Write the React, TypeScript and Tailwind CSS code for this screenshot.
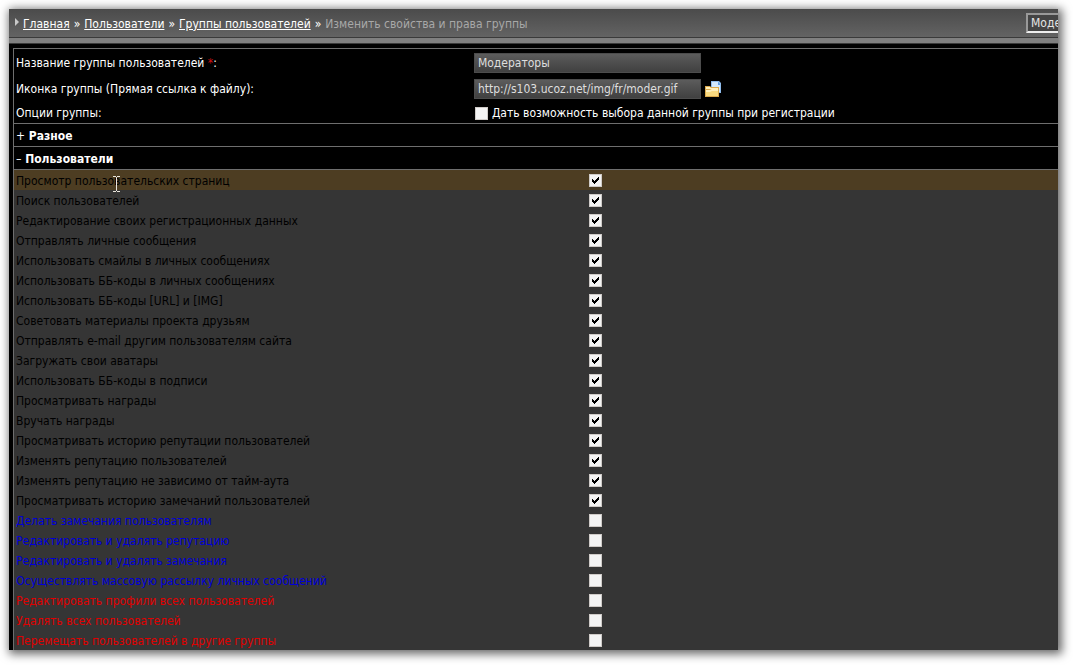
import { useState } from "react";

const permissions = [
  { label: "Просмотр пользовательских страниц", on: true },
  { label: "Поиск пользователей", on: true },
  { label: "Редактирование своих регистрационных данных", on: true },
  { label: "Отправлять личные сообщения", on: true },
  { label: "Использовать смайлы в личных сообщениях", on: true },
  { label: "Использовать ББ-коды в личных сообщениях", on: true },
  { label: "Использовать ББ-коды [URL] и [IMG]", on: true },
  { label: "Советовать материалы проекта друзьям", on: true },
  { label: "Отправлять e-mail другим пользователям сайта", on: true },
  { label: "Загружать свои аватары", on: true },
  { label: "Использовать ББ-коды в подписи", on: true },
  { label: "Просматривать награды", on: true },
  { label: "Вручать награды", on: true },
  { label: "Просматривать историю репутации пользователей", on: true },
  { label: "Изменять репутацию пользователей", on: true },
  { label: "Изменять репутацию не зависимо от тайм-аута", on: true },
  { label: "Просматривать историю замечаний пользователей", on: true },
  { label: "Делать замечания пользователям", on: false, color: "text-[#0000d8]" },
  { label: "Редактировать и удалять репутацию", on: false, color: "text-[#0000d8]" },
  { label: "Редактировать и удалять замечания", on: false, color: "text-[#0000d8]" },
  { label: "Осуществлять массовую рассылку личных сообщений", on: false, color: "text-[#0000d8]" },
  { label: "Редактировать профили всех пользователей", on: false, color: "text-[#e00000]" },
  { label: "Удалять всех пользователей", on: false, color: "text-[#e00000]" },
  { label: "Перемещать пользователей в другие группы", on: false, color: "text-[#e00000]" },
];

function Checkbox({ id, defaultChecked }: { id: string; defaultChecked?: boolean }) {
  return (
    <span className="grid size-[13px] shrink-0 place-items-center">
      <input
        id={id}
        type="checkbox"
        defaultChecked={defaultChecked}
        className="peer col-start-1 row-start-1 size-[13px] appearance-none border border-[#cfcbc8] bg-[#f4f4f4]"
      />
      <svg
        className="pointer-events-none col-start-1 row-start-1 hidden size-[7px] peer-checked:block"
        viewBox="0 0 7 7"
        shapeRendering="crispEdges"
      >
        <path
          d="M0 2h1v1h1v1h1v-1h1v-1h1v-1h1v-1h1v3h-1v1h-1v1h-1v1h-1v1h-1v-1h-1v-1h-1z"
          fill="#000"
        />
      </svg>
    </span>
  );
}

function FolderIcon() {
  return (
    <svg width="16" height="16" viewBox="0 0 16 16">
      <path d="M6 0h8l2 2v10H6z" fill="#8fbcec" />
      <path d="M7 1h6v3h2v7H7z" fill="#d3e8fb" />
      <path d="M13 1l2 2v1h-2z" fill="#5d9be0" />
      <path d="M0 5h5l1 1h8v10H0z" fill="#dba94c" />
      <path d="M1 6h4l1 1h7v1H1z" fill="#fff0bd" />
      <path d="M1 9h4l2-1h6v7H1z" fill="#f9da80" />
      <path d="M1 9h4l2-1h6v2H7l-2 1H1z" fill="#fff0bd" />
    </svg>
  );
}

function TextCursor() {
  return (
    <svg className="pointer-events-none absolute top-[6px] left-[99px]" width="7" height="16" viewBox="0 0 7 16" shapeRendering="crispEdges">
      <path d="M0 0h3v1h1V0h3v1H4v14h3v1H4v-1H3v1H0v-1h3V1H0z" fill="#e8e4dc" />
    </svg>
  );
}

export default function App() {
  const [miscOpen, setMiscOpen] = useState(false);
  const [usersOpen, setUsersOpen] = useState(true);

  return (
    <div className="bg-white pt-[9px] pr-[15px] pb-[15px] pl-[9px] font-['DejaVu_Sans_Condensed','DejaVu_Sans',sans-serif] text-xs text-white">
      <div className="overflow-hidden bg-black shadow-[2px_2px_9px_2px_rgba(0,0,0,0.6)]">
        <header className="flex h-7 items-center justify-between bg-linear-to-b from-[#4b4b4b] to-[#636363] pl-1">
          <nav className="flex items-center gap-1 pt-px whitespace-nowrap">
            <svg className="-mt-1 w-[6px]" height="8" viewBox="0 0 6 8">
              <path d="M2 0l4 4-4 4z" fill="#c8c8c8" />
            </svg>
            <a href="#" className="underline">Главная</a>
            <span>»</span>
            <a href="#" className="underline">Пользователи</a>
            <span>»</span>
            <a href="#" className="underline">Группы пользователей</a>
            <span>»</span>
            <span className="text-[#a8a8a8]">Изменить свойства и права группы</span>
          </nav>
          <div className="w-8 shrink-0 overflow-hidden">
            <select
              aria-label="Группа"
              className="block h-5 w-36 appearance-none border-2 border-t-[#999] border-r-[#eee] border-b-[#eee] border-l-[#999] bg-[#444] pl-[3px] leading-4 text-[#e4e4e4]"
            >
              <option>Модераторы</option>
            </select>
          </div>
        </header>
        <div className="h-[7px] border-y border-[#3a3a3a] bg-[#808080]" />

        <main className="pt-1 pl-1">
          <div className="border-t border-l border-[#6e6e6e]">
            <div className="grid grid-cols-[44%_1fr] items-center pt-[3px] pl-px leading-5">
              <label htmlFor="name" className="pt-px pl-px">
                Название группы пользователей <span className="text-[#d01010]">*</span>:
              </label>
              <div className="flex h-5 items-center">
                <input
                  id="name"
                  defaultValue="Модераторы"
                  className="h-5 w-[227px] border border-[#4c4c4c] bg-linear-to-b from-[#5c5c5c] to-[#404040] px-[3px] pt-px text-[#dedede]"
                />
              </div>
              <label htmlFor="icon" className="mt-[5px] pt-px pl-px">
                Иконка группы (Прямая ссылка к файлу):
              </label>
              <div className="mt-[5px] flex h-5 items-center gap-1">
                <input
                  id="icon"
                  defaultValue="http://s103.ucoz.net/img/fr/moder.gif"
                  className="h-5 w-[227px] border border-[#4c4c4c] bg-linear-to-b from-[#5c5c5c] to-[#404040] px-[3px] pt-px text-[#dedede]"
                />
                <button type="button" aria-label="Выбрать файл">
                  <FolderIcon />
                </button>
              </div>
              <span className="mt-1 pl-px">Опции группы:</span>
              <div className="mt-1 flex items-center gap-1 pl-px">
                <Checkbox id="reg" />
                <label htmlFor="reg">Дать возможность выбора данной группы при регистрации</label>
              </div>
            </div>

            <button
              type="button"
              aria-expanded={miscOpen}
              onClick={() => setMiscOpen(!miscOpen)}
              className="block h-[23px] w-full border-t border-[#6e6e6e] pt-px pl-[2px] text-left font-bold"
            >
              <span className="font-normal">{miscOpen ? "–" : "+"}</span> Разное
            </button>
            <button
              type="button"
              aria-expanded={usersOpen}
              onClick={() => setUsersOpen(!usersOpen)}
              className="block h-6 w-full border-y border-[#6e6e6e] pt-px pl-[2px] text-left font-bold"
            >
              <span className="font-normal">{usersOpen ? "–" : "+"}</span> Пользователи
            </button>

            {usersOpen && (
              <table className="w-full table-fixed border-collapse bg-[#353535] text-black">
                <tbody>
                  {permissions.map((p, i) => (
                    <tr key={p.label} className={i === 0 ? "bg-[#4d3d22]" : "hover:bg-[#4d3d22]"}>
                      <td className="relative h-5 w-[55%] p-0 pt-[2px] pl-[2px] leading-[18px]">
                        <label htmlFor={`perm-${i}`} className={p.color}>
                          {p.label}
                        </label>
                        {i === 0 && <TextCursor />}
                      </td>
                      <td className="h-5 p-0 pl-px">
                        <Checkbox id={`perm-${i}`} defaultChecked={p.on} />
                      </td>
                    </tr>
                  ))}
                </tbody>
              </table>
            )}
          </div>
        </main>
      </div>
    </div>
  );
}
